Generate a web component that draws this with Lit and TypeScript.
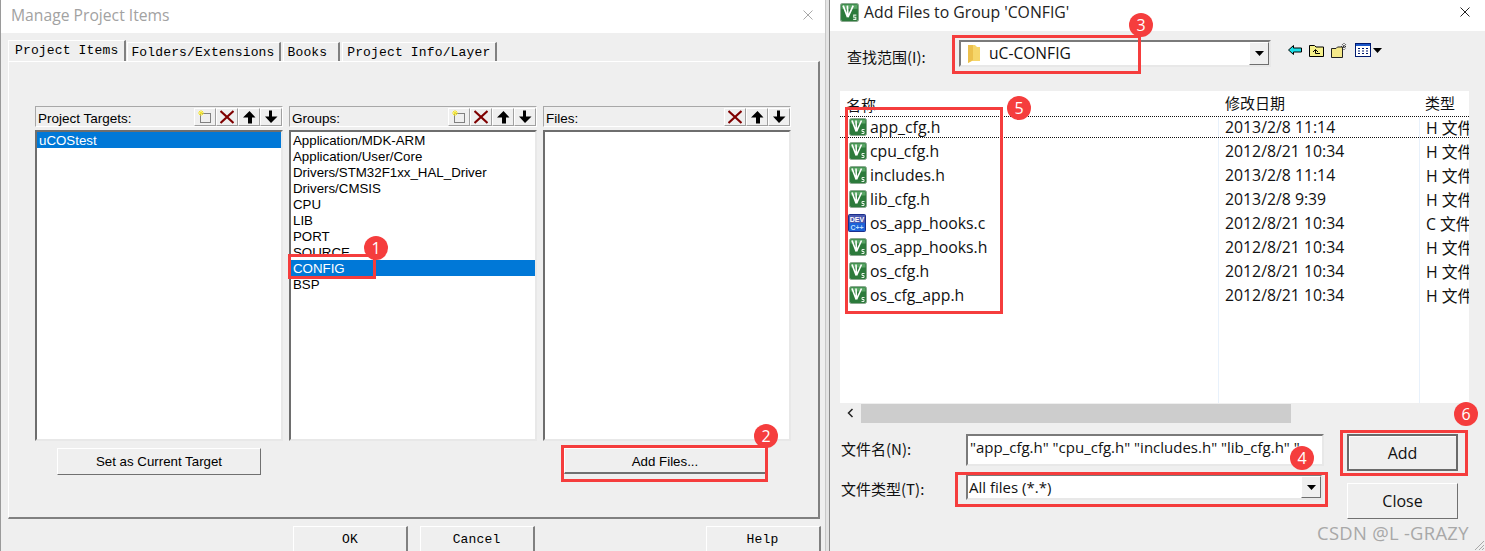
import { LitElement, html, css } from "lit";
import { customElement } from "lit/decorators.js";

const uvIcon = (big = false) => html`<svg class=${big ? "uv big" : "uv"} viewBox="0 0 18 18" aria-hidden="true">
  <rect x="0.5" y="0.5" width="17" height="17" rx="2" fill="#2c7a3b" stroke="#8aa98f"/>
  <rect x="1.5" y="1.5" width="15" height="4" fill="#5aa566"/>
  <path d="M3 2.500L7.200 13.500M7 2.500L7.500 13M12.500 2.500L7.500 13.500" fill="none" stroke="#fff" stroke-width="1.600"/>
  <path d="M15.500 11.500H13V13.500H15V15.500H12.500" fill="none" stroke="#e6f2e6" stroke-width="1"/>
</svg>`;

const devIcon = () => html`<svg class="uv" viewBox="0 0 18 18" aria-hidden="true">
  <rect x="0" y="0" width="18" height="18" rx="2" fill="#1b2f8c"/>
  <rect x="1" y="1" width="16" height="8" fill="#4a5ab0"/>
  <rect x="1" y="9" width="16" height="8" fill="#1c62d8"/>
  <text x="9" y="7.500" text-anchor="middle" font-family="Liberation Sans" font-weight="700" font-size="7" fill="#fff">DEV</text>
  <text x="9" y="15.500" text-anchor="middle" font-family="Liberation Sans" font-weight="700" font-size="7" fill="#bfe0ff">C++</text>
</svg>`;

const newIcon = () => html`<svg class="tool" viewBox="0 0 14 14" aria-hidden="true">
  <rect x="2.500" y="3.500" width="10" height="9" fill="none" stroke="#111" stroke-dasharray="1 1"/>
  <path d="M3 0v6M0 3h6M1 1l4 4M5 1L1 5" stroke="#f5e62a" stroke-width="1"/>
</svg>`;
const xIcon = () => html`<svg class="tool" viewBox="0 0 14 14" aria-hidden="true">
  <path d="M.5 1L13.500 13M13.500 1L.5 13" stroke="#7f0000" stroke-width="2.200" fill="none"/>
</svg>`;
const upIcon = () => html`<svg class="tool" viewBox="0 0 14 14" aria-hidden="true">
  <path d="M7.500 1L13.500 7.500H10V13.500H6V7.500H1Z" fill="#000"/>
</svg>`;
const downIcon = () => html`<svg class="tool" viewBox="0 0 14 14" aria-hidden="true">
  <path d="M8 .5V6.500H13.500L7 13L1 6.500H5V.5Z" fill="#000"/>
</svg>`;
const caret = () => html`<svg class="caret" viewBox="0 0 9 5" aria-hidden="true"><path d="M0 0H9L4.500 5Z" fill="#000"/></svg>`;

const rows: [string, string, string, boolean][] = [
  ["app_cfg.h", "2013/2/8 11:14", "H 文件", false],
  ["cpu_cfg.h", "2012/8/21 10:34", "H 文件", false],
  ["includes.h", "2013/2/8 11:14", "H 文件", false],
  ["lib_cfg.h", "2013/2/8 9:39", "H 文件", false],
  ["os_app_hooks.c", "2012/8/21 10:34", "C 文件", true],
  ["os_app_hooks.h", "2012/8/21 10:34", "H 文件", false],
  ["os_cfg.h", "2012/8/21 10:34", "H 文件", false],
  ["os_cfg_app.h", "2012/8/21 10:34", "H 文件", false],
];

const groups = ["Application/MDK-ARM", "Application/User/Core", "Drivers/STM32F1xx_HAL_Driver", "Drivers/CMSIS", "CPU", "LIB", "PORT", "SOURCE", "CONFIG", "BSP"];

const marks: [number, number, number, number][] = [
  [288, 254, 88, 25],
  [561, 445, 207, 37],
  [952, 35, 189, 39],
  [955, 472, 373, 35],
  [845, 107, 158, 207],
  [1340, 430, 128, 46],
];
const badges: [string, number, number][] = [
  ["1", 376, 248],
  ["2", 766, 436],
  ["3", 1141, 25],
  ["4", 1302, 458],
  ["5", 1019, 108],
  ["6", 1466, 414],
];

@customElement("app-root")
export class AppRoot extends LitElement {
  static styles = css`
    :host { display: block; position: relative; width: 1485px; height: 551px; overflow: hidden; background: #efefef; font-family: "Liberation Sans", Arial, sans-serif; color: #000; }
    .desk { display: flex; height: 551px; }

    /* left window */
    .win-l { width: 826px; flex: none; box-sizing: border-box; border-left: 1px solid #9a9a9a; display: flex; flex-direction: column; background: #efefef; border-right: 1px solid #c8c8c8; }
    .title-l { height: 33px; flex: none; background: #fff; display: flex; align-items: center; justify-content: space-between; padding: 0 12px 4px 10px; box-sizing: border-box; color: #a2a2a2; font: 15.700px "Open Sans", sans-serif; }
    .x { width: 10px; height: 10px; display: block; }
    .tabs { display: flex; padding: 7px 0 0 7px; height: 21px; align-items: flex-end; flex: none; font: 13px "Liberation Mono", monospace; letter-spacing: 0.15px; }
    .tab { height: 19px; box-sizing: border-box; padding: 1px 4px 0 3px; border-top: 1px solid #fff; border-left: 1px solid #fff; border-right: 2px solid #808080; margin-right: 2px; white-space: nowrap; line-height: 17px; }
    .tab.on { height: 21px; padding: 0 6px 0 6px; margin-right: 1px; line-height: 19px; background: #efefef; }
    .tab.bk { padding: 1px 3px 0 4px; }
    .tab.pi { padding: 1px 5px 0 4px; }
    .panel { margin-left: 7px; width: 812px; height: 458px; flex: none; box-sizing: border-box; border-top: 1px solid #fff; border-left: 1px solid #fff; border-right: 2px solid #808080; border-bottom: 2px solid #808080; padding: 44px 0 0 26px; }
    .cols { display: flex; gap: 6px; }
    .col { width: 248px; display: flex; flex-direction: column; }
    .head { height: 21px; box-sizing: border-box; border: 1px solid; border-color: #a8a8a8 #fff #fff #a8a8a8; display: flex; align-items: center; justify-content: space-between; font-size: 13.500px; padding-left: 2px; }
    .head .lbl { padding-top: 4px; }
    .tools { display: flex; align-self: flex-start; margin-top: 1px; }
    .tb { width: 22px; height: 18px; box-sizing: border-box; border: 1px solid; border-color: #fff #a0a0a0 #a0a0a0 #fff; display: flex; align-items: center; justify-content: center; }
    .tool { width: 14px; height: 14px; display: block; }
    .list { margin-top: 3px; height: 311px; box-sizing: border-box; background: #fff; border: 2px solid; border-color: #6e6e6e #e8e8e8 #e8e8e8 #6e6e6e; font-size: 13.300px; line-height: 18px; overflow: hidden; }
    .item { height: 16px; padding-left: 2px; white-space: nowrap; }
    .item.sel { background: #0078d7; color: #fff; }
    .btns { display: flex; padding-top: 7px; }
    .btn { box-sizing: border-box; background: #efefef; border: 1px solid; border-color: #fff #707070 #707070 #fff; display: flex; align-items: center; justify-content: center; font-size: 13.300px; }
    .set { width: 204px; height: 27px; margin-left: 22px; }
    .addf { width: 202px; height: 26px; margin-left: 303px; border-bottom-width: 2px; padding-top: 2px; }
    .foot { display: flex; flex: none; padding: 7px 0 0 292px; font: 13px "Liberation Mono", monospace; letter-spacing: 0.15px; }
    .fb { height: 40px; box-sizing: border-box; border: 1px solid; border-color: #fff #808080 transparent #fff; border-right-width: 2px; display: flex; justify-content: center; padding: 5px 1px 0 0; width: 115px; line-height: 15px; }
    .fb.ok { margin-right: 12px; padding-right: 0; }
    .fb.help { margin-left: 171px; }

    .seam { width: 3px; flex: none; background: #e4e4e4; border-right: 1px solid #8a8a8a; }

    /* right window */
    .win-r { flex: 1; display: flex; flex-direction: column; background: #efefef; min-width: 0; }
    .title-r { height: 31px; flex: none; background: #fff; display: flex; align-items: center; padding: 0 15px 8px 10px; box-sizing: border-box; font: 15.800px "Open Sans", sans-serif; color: #222; }
    .title-r .t { flex: 1; padding-left: 5px; }
    .uv { width: 18px; height: 18px; flex: none; display: block; }
    .uv.big { width: 19px; height: 19px; margin-top: 2px; }
    .look { display: flex; align-items: center; flex: none; height: 60px; padding: 0 0 0 17px; box-sizing: border-box; }
    .cjk { font: 15px "Noto Sans CJK SC", sans-serif; white-space: nowrap; color: #111; }
    .look .cjk { width: 112px; margin-top: -10px; }
    .combo { box-sizing: border-box; width: 312px; height: 27px; background: #fff; border: 2px solid; border-color: #7a7a7a #e8e8e8 #e8e8e8 #7a7a7a; display: flex; align-items: center; margin-top: -15px; }
    .folder { width: 12px; height: 18px; margin-left: 7px; flex: none; }
    .combo .v { font: 15.600px "Open Sans", sans-serif; padding: 0 0 2px 9px; flex: 1; color: #111; }
    .drop { width: 20px; height: 100%; box-sizing: border-box; background: #efefef; border: 1px solid; border-color: #fff #6e6e6e #6e6e6e #fff; display: flex; align-items: center; justify-content: center; flex: none; }
    .caret { width: 9px; height: 5px; display: block; }
    .mini { display: flex; align-items: center; margin: -22px 0 0 17px; gap: 7px; }
    .mini svg { display: block; }
    .view { display: flex; align-items: center; gap: 2px; }
    .files { margin-left: 10px; width: 629px; height: 312px; flex: none; background: #fff; display: flex; flex-direction: column; overflow: hidden; font: 15.800px "Open Sans", sans-serif; color: #111; }
    .hrow, .frow { display: grid; grid-template-columns: 378px 201px 50px; }
    .hrow { height: 25px; flex: none; border-bottom: 1px dotted #111; }
    .hrow > div { font: 15px "Noto Sans CJK SC", sans-serif; padding: 1px 0 0 7px; overflow: hidden; white-space: nowrap; }
    .hrow > div:first-child { padding: 3px 0 0 6px; }
    .hrow > div:last-child { padding-left: 6px; }
    .frows { flex: 1; display: flex; flex-direction: column; background-image: linear-gradient(#e8f1fb, #e8f1fb), linear-gradient(#e8f1fb, #e8f1fb); background-size: 1px 100%; background-repeat: no-repeat; background-position: 378px 0, 579px 0; }
    .frow { height: 24px; box-sizing: border-box; flex: none; }
    .frow.focus { border-bottom: 1px dotted #111; height: 21px; margin-bottom: 1px; }
    .cell { display: flex; align-items: center; white-space: nowrap; overflow: hidden; padding-left: 7px; }
    .cell.n { padding-left: 9px; gap: 3px; }
    .cell.n.d { padding-left: 8px; gap: 4px; }
    .ty { font-family: "Open Sans", "Noto Sans CJK SC", sans-serif; }
    .scroll { flex: none; height: 20px; margin-left: 10px; display: flex; align-items: flex-end; }
    .scroll .ar { width: 21px; height: 20px; display: flex; align-items: center; justify-content: center; }
    .thumb { width: 430px; height: 19px; background: #cdcdcd; }
    .bottom { flex: 1; display: flex; padding: 11px 0 0 11px; }
    .fields { width: 506px; display: flex; flex-direction: column; }
    .fr { display: flex; align-items: center; }
    .fr .cjk { width: 125px; flex: none; margin-bottom: 4px; }
    .fr.fr2 .cjk { margin: 2px 0 0; }
    .inp { box-sizing: border-box; width: 358px; height: 32px; background: #fff; border: 2px solid; border-color: #7a7a7a #e8e8e8 #e8e8e8 #7a7a7a; font: 15px/22px "Open Sans", sans-serif; padding-left: 2px; white-space: nowrap; overflow: hidden; color: #111; }
    .fr2 { margin-top: 8px; }
    .cmb2 { width: 357px; height: 26px; box-sizing: border-box; background: #fff; border: 2px solid; border-color: #7a7a7a #e8e8e8 #e8e8e8 #7a7a7a; display: flex; align-items: center; font: 15px "Open Sans", sans-serif; padding-left: 1px; color: #111; }
    .cmb2 .v { flex: 1; }
    .acts { display: flex; flex-direction: column; }
    .act { width: 111px; box-sizing: border-box; background: #efefef; border: 1px solid; border-color: #fff #707070 #707070 #fff; display: flex; align-items: center; justify-content: center; font: 16px "Open Sans", sans-serif; color: #111; }
    .act.add { height: 37px; border-width: 2px; border-color: #6a6a6a; box-shadow: inset 1px 1px 0 #fff; }
    .act.cl { height: 36px; margin-top: 12px; }
    .mark-ov { position: absolute; box-sizing: border-box; border: 3px solid #f53d3d; pointer-events: none; }
    .badge { position: absolute; width: 24px; height: 24px; margin: -12px 0 0 -12px; border-radius: 50%; background: #f53d3d; color: #fff; font: 16px/24px "Open Sans", sans-serif; text-align: center; }
    .wm { position: absolute; left: 1317px; top: 522px; font: 18.400px/22px "Open Sans", sans-serif; color: #a8a8a8; letter-spacing: 0.3px; white-space: nowrap; }
    .grip { position: absolute; right: 1px; bottom: 1px; display: block; }
  `;

  private col(label: string, withNew: boolean, items: string[], sel: number) {
    return html`<div class="col">
      <div class="head"><span class="lbl">${label}</span>
        <div class="tools">
          ${withNew ? html`<div class="tb">${newIcon()}</div>` : ""}
          <div class="tb">${xIcon()}</div><div class="tb">${upIcon()}</div><div class="tb">${downIcon()}</div>
        </div>
      </div>
      <div class="list">${items.map((t, i) => html`<div class="item ${i === sel ? "sel" : ""}">${t}</div>`)}</div>
    </div>`;
  }

  render() {
    return html`
      <div class="desk">
        <section class="win-l">
          <div class="title-l"><span>Manage Project Items</span>
            <svg class="x" viewBox="0 0 10 10"><path d="M.5.5l9 9M9.500.5l-9 9" stroke="#a8a8a8" fill="none"/></svg></div>
          <div class="tabs">
            <div class="tab on">Project Items</div>
            <div class="tab">Folders/Extensions</div>
            <div class="tab bk">Books&nbsp;</div>
            <div class="tab pi">Project Info/Layer</div>
          </div>
          <div class="panel">
            <div class="cols">
              ${this.col("Project Targets:", true, ["uCOStest"], 0)}
              ${this.col("Groups:", true, groups, 8)}
              ${this.col("Files:", false, [], -1)}
            </div>
            <div class="btns">
              <div class="btn set">Set as Current Target</div>
              <div class="btn addf">Add Files...</div>
            </div>
          </div>
          <div class="foot">
            <div class="fb ok">OK</div><div class="fb">Cancel</div><div class="fb help">Help</div>
          </div>
        </section>
        <div class="seam"></div>
        <section class="win-r">
          <div class="title-r">${uvIcon(true)}<span class="t">Add Files to Group 'CONFIG'</span>
            <svg class="x" viewBox="0 0 10 10"><path d="M.5.5l9 9M9.500.5l-9 9" stroke="#222" fill="none"/></svg></div>
          <div class="look">
            <span class="cjk">查找范围(I):</span>
            <div class="combo">
              <svg class="folder" viewBox="0 0 12 18"><path d="M0 0H7L9 2H12V16H4L0 18Z" fill="#f6d66a"/><path d="M0 0H5V15L0 18Z" fill="#ecc04c"/></svg>
              <span class="v">uC-CONFIG</span>
              <div class="drop">${caret()}</div>
            </div>
            <div class="mini">
              <svg width="14" height="10" viewBox="0 0 14 10"><path d="M.5 5L5.500.5V3H13.500V7H5.500V9.500Z" fill="#19e0e8" stroke="#000"/></svg>
              <svg width="15" height="13" viewBox="0 0 15 13"><path d="M.5 12.500V1.500H5.500L7 3H14.500V12.500Z" fill="#f5f08a" stroke="#000"/><path d="M4 8L6.500 5.500L9 8M6.500 6V9.500H11" stroke="#000" fill="none"/></svg>
              <svg width="17" height="15" viewBox="0 0 17 15"><path d="M.5 14.500V5.500H5L6.500 4H11.500V14.500Z" fill="#f5e98a" stroke="#222"/><path d="M13 0v7M10 3.500h6M11 1l4 5M15 1l-4 5" stroke="#333" stroke-dasharray="1 1"/></svg>
              <span class="view">
                <svg width="16" height="14" viewBox="0 0 16 14"><rect x=".5" y=".5" width="15" height="13" fill="#fff" stroke="#001a70"/><rect x="1" y="1" width="14" height="2" fill="#1a56c8"/><path d="M3 5.500h2M7 5.500h2M11 5.500h2M3 8h2M7 8h2M11 8h2M3 10.500h2M7 10.500h2M11 10.500h2" stroke="#001a70"/></svg>
                <svg width="9" height="5" viewBox="0 0 9 5"><path d="M0 0H9L4.500 5Z"/></svg>
              </span>
            </div>
          </div>
          <div class="files">
            <div class="hrow"><div>名称</div><div>修改日期</div><div>类型</div></div>
            <div class="frows">
              ${rows.map(([n, d, t, dev], i) => html`<div class="frow ${i === 0 ? "focus" : ""}">
                <div class="cell n ${dev ? "d" : ""}">${dev ? devIcon() : uvIcon()}<span>${n}</span></div>
                <div class="cell">${d}</div>
                <div class="cell ty">${t}</div>
              </div>`)}
            </div>
          </div>
          <div class="scroll">
            <div class="ar"><svg width="7" height="10" viewBox="0 0 7 10"><path d="M5.500 1L1.500 5L5.500 9" stroke="#222" stroke-width="1.500" fill="none"/></svg></div>
            <div class="thumb"></div>
          </div>
          <div class="bottom">
            <div class="fields">
              <div class="fr"><span class="cjk">文件名(N):</span><div class="inp">"app_cfg.h" "cpu_cfg.h" "includes.h" "lib_cfg.h" "</div></div>
              <div class="fr fr2"><span class="cjk">文件类型(T):</span><div class="cmb2"><span class="v">All files (*.*)</span><div class="drop">${caret()}</div></div></div>
            </div>
            <div class="acts">
              <div class="act add">Add</div>
              <div class="act cl">Close</div>
            </div>
          </div>
        </section>
      </div>
      ${marks.map(([x, y, w, h]) => html`<div class="mark-ov" style="left:${x}px;top:${y}px;width:${w}px;height:${h}px"></div>`)}
      ${badges.map(([t, x, y]) => html`<div class="badge" style="left:${x}px;top:${y}px">${t}</div>`)}
      <div class="wm">CSDN @L -GRAZY</div>
      <svg class="grip" width="10" height="10" viewBox="0 0 10 10" aria-hidden="true"><path d="M10 1L1 10M10 5L5 10M10 8L8 10" stroke="#a8a8a8" fill="none"/></svg>
    `;
  }
}
